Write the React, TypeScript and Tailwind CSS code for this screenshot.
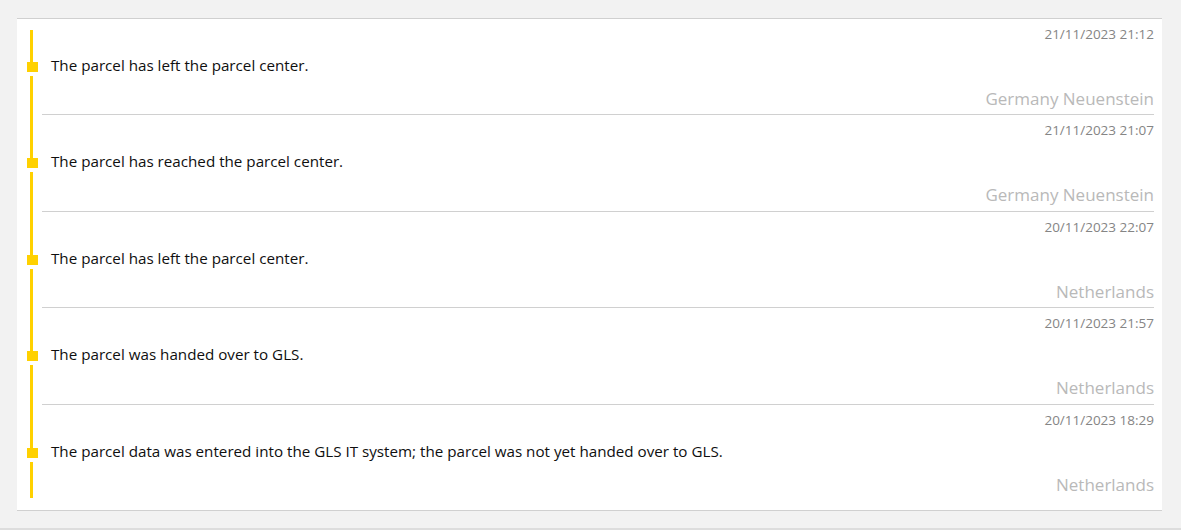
import React from 'react';

type TrackingEvent = {
  date: string;
  message: string;
  location: string;
};

const events: TrackingEvent[] = [
  { date: '21/11/2023 21:12', message: 'The parcel has left the parcel center.', location: 'Germany Neuenstein' },
  { date: '21/11/2023 21:07', message: 'The parcel has reached the parcel center.', location: 'Germany Neuenstein' },
  { date: '20/11/2023 22:07', message: 'The parcel has left the parcel center.', location: 'Netherlands' },
  { date: '20/11/2023 21:57', message: 'The parcel was handed over to GLS.', location: 'Netherlands' },
  {
    date: '20/11/2023 18:29',
    message: 'The parcel data was entered into the GLS IT system; the parcel was not yet handed over to GLS.',
    location: 'Netherlands',
  },
];

// --- One row of the timeline ---
const EventRow: React.FC<{ event: TrackingEvent; index: number; total: number }> = ({ event, index, total }) => {
  const isFirst = index === 0;
  const isLast = index === total - 1;
  const rowHeight = isLast ? 'h-[105px]' : index % 2 === 0 ? 'h-24' : 'h-[97px]';

  return (
    <div className={`flex ${rowHeight}`}>
      {/* Timeline column */}
      <div className="w-[25px] shrink-0 flex flex-col">
        {isFirst && <div className="h-[11px] shrink-0" />}
        <div className={`${isFirst ? 'h-[32px]' : 'h-[43px]'} ml-[13px] w-[3px] bg-[#ffd100] shrink-0`} />
        <div className="ml-[10px] w-[11px] h-[10px] bg-[#ffd100] shrink-0" />
        <div className="h-[4px] shrink-0" />
        <div className="flex-1 ml-[13px] w-[3px] bg-[#ffd100]" />
        {isLast && <div className="h-[12px] shrink-0" />}
      </div>

      {/* Content column */}
      <div className={`flex-1 mr-[8px] flex flex-col ${isLast ? '' : 'border-b border-[#d0d0d0]'}`}>
        <div className="mt-[5px] text-right text-[13.5px] leading-[20px] text-[#858585]">{event.date}</div>
        <div className="mt-[11px] ml-[9px] text-[15.2px] leading-[20px] text-[#0f0f0f]">{event.message}</div>
        <div className="mt-[12px] text-right text-[17px] leading-[24px] text-[#b9b9b9]">{event.location}</div>
      </div>
    </div>
  );
};

const App: React.FC = () => {
  return (
    <div className="w-full min-h-[532px] bg-white" style={{ fontFamily: '"Open Sans", "Noto Sans", sans-serif' }}>
      <div className="h-[530px] bg-[#f2f2f2] border-b-2 border-[#dddddd] pt-[18px]">
        <div className="ml-[17px] mr-[19px] bg-white border-y border-[#d0d0d0]">
          {events.map((event, i) => (
            <EventRow key={i} event={event} index={i} total={events.length} />
          ))}
        </div>
      </div>
    </div>
  );
};

export default App;
